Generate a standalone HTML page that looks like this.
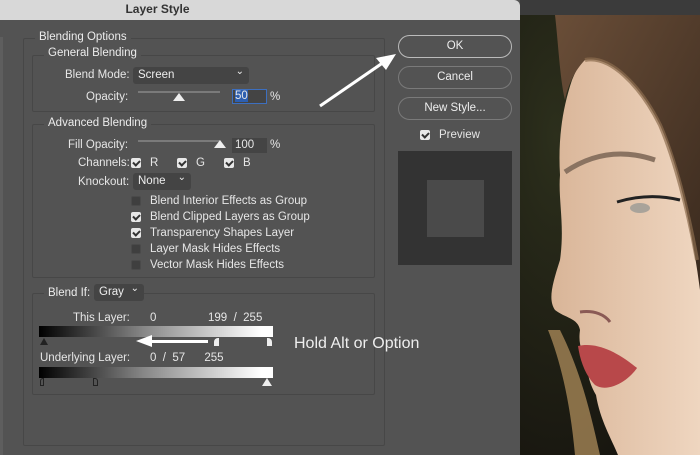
<!DOCTYPE html>
<html><head><meta charset="utf-8"><style>
*{margin:0;padding:0;box-sizing:border-box}
body{width:700px;height:455px;overflow:hidden;background:#535353;font-family:"Liberation Sans",Arial,sans-serif;font-size:11.5px;color:#e6e6e6;position:relative}
.a{position:absolute;white-space:nowrap}
.box{position:absolute;border:1px solid #474747;border-radius:2px}
.lg{position:absolute;background:#535353;padding:0 4px;font-size:11.5px;color:#ececec}
.dd{position:absolute;background:#444;border-radius:3px;height:17px;padding:2px 5px;color:#eee}
.dd:after{content:"⌄";position:absolute;right:5px;top:-1px;font-size:10px}
.cb{position:absolute;width:10px;height:10px;border-radius:2px;background:#3f3f3f;border:1px solid #4a4a4a}
.cb.on{background:#e8e8e8;border:none}
.cb.on:after{content:"";position:absolute;left:3px;top:1px;width:3px;height:5px;border:solid #333;border-width:0 2px 2px 0;transform:rotate(45deg)}
.btn{position:absolute;left:398px;width:114px;height:23px;border:1px solid #7a7a7a;border-radius:12px;text-align:center;line-height:21px;color:#eee;font-size:11.5px}
.fld{position:absolute;background:#444;height:15px;padding:1px 3px}
</style></head><body>
<svg class="a" style="left:520px;top:0" width="180" height="455" viewBox="520 0 180 455">
<defs><radialGradient id="bg" cx="0.2" cy="0.3" r="0.8"><stop offset="0" stop-color="#2c2f1c"/><stop offset="1" stop-color="#17150f"/></radialGradient>
<linearGradient id="sk" x1="0" y1="0" x2="1" y2="0"><stop offset="0" stop-color="#d9b598"/><stop offset="1" stop-color="#efd6c0"/></linearGradient>
<linearGradient id="hr" x1="0" y1="0" x2="1" y2="1"><stop offset="0" stop-color="#6a4e38"/><stop offset="1" stop-color="#3a2a1e"/></linearGradient></defs>
<rect x="520" y="0" width="180" height="455" fill="url(#bg)"/>
<rect x="520" y="0" width="180" height="15" fill="#3b3b3b"/>
<path d="M572 80 C562 110 558 140 560 175 C558 200 565 225 560 260 C552 285 548 300 555 310 C565 318 578 318 580 330 C578 345 582 352 588 360 C586 372 590 385 596 395 C600 420 612 440 618 455 L700 455 L700 15 L600 15 Z" fill="url(#sk)"/>
<path d="M555 15 L700 15 L700 290 C692 230 680 170 660 125 C640 85 610 55 585 60 C575 70 568 85 565 100 C560 80 558 40 555 15Z" fill="url(#hr)"/>
<path d="M585 60 C610 55 640 85 660 125 C675 160 688 210 697 260" stroke="#8c6c4e" stroke-width="4" fill="none" opacity="0.7"/>
<path d="M565 172 C590 155 620 148 655 160" stroke="#8a7361" stroke-width="5" fill="none"/>
<path d="M617 202 C640 195 660 195 680 200" stroke="#222" stroke-width="3" fill="none"/>
<ellipse cx="640" cy="208" rx="10" ry="5" fill="#a9a39a"/>
<path d="M578 346 C595 342 615 350 637 368 C625 385 605 392 595 385 C585 375 580 360 578 346Z" fill="#b8484a"/>
<path d="M580 312 C595 310 605 315 610 322" stroke="#8a5a55" stroke-width="3" fill="none"/>
<path d="M548 330 C560 360 570 400 575 455 L600 455 C590 410 580 370 560 330Z" fill="#9c7f52" opacity="0.85"/>
</svg>
<div class="a" style="left:0;top:0;width:520px;height:455px;background:#535353;border-radius:0 0 8px 0"></div>
<div class="a" style="left:0;top:0;width:520px;height:20px;background:#d8d8d8;border-radius:0 6px 0 0;text-align:center;line-height:19px;color:#333;font-weight:bold;font-size:12px;padding-right:205px">Layer Style</div>
<div class="a" style="left:0;top:37px;width:3px;height:418px;background:#5e5e5e"></div>
<div class="box" style="left:23px;top:38px;width:362px;height:408px"></div>
<div class="lg" style="left:35px;top:31px">Blending Options</div>
<div class="box" style="left:32px;top:55px;width:343px;height:57px"></div>
<div class="lg" style="left:44px;top:47px">General Blending</div>
<div class="a" style="left:65px;top:69px">Blend Mode:</div>
<div class="dd" style="left:133px;top:67px;width:116px">Screen</div>
<div class="a" style="left:86px;top:91px">Opacity:</div>
<div class="a" style="left:138px;top:91px;width:82px;height:2px;background:#7a7a7a"></div>
<div class="a" style="left:173px;top:93px;width:0;height:0;border-left:6px solid transparent;border-right:6px solid transparent;border-bottom:8px solid #eee"></div>
<div class="fld" style="left:232px;top:89px;width:35px;border:1px solid #3d6fbf;padding:0 2px"><span style="background:#2d5fb0">50</span></div>
<div class="a" style="left:270px;top:91px">%</div>
<div class="box" style="left:32px;top:124px;width:343px;height:154px"></div>
<div class="lg" style="left:44px;top:117px">Advanced Blending</div>
<div class="a" style="left:68px;top:139px">Fill Opacity:</div>
<div class="a" style="left:138px;top:140px;width:82px;height:2px;background:#7a7a7a"></div>
<div class="a" style="left:214px;top:140px;width:0;height:0;border-left:6px solid transparent;border-right:6px solid transparent;border-bottom:8px solid #eee"></div>
<div class="fld" style="left:232px;top:138px;width:35px">100</div>
<div class="a" style="left:270px;top:139px">%</div>
<div class="a" style="left:78px;top:157px">Channels:</div>
<div class="cb on" style="left:131px;top:158px"></div><div class="a" style="left:150px;top:157px">R</div>
<div class="cb on" style="left:177px;top:158px"></div><div class="a" style="left:196px;top:157px">G</div>
<div class="cb on" style="left:224px;top:158px"></div><div class="a" style="left:243px;top:157px">B</div>
<div class="a" style="left:78px;top:176px">Knockout:</div>
<div class="dd" style="left:133px;top:173px;width:58px">None</div>
<div class="cb" style="left:131px;top:196px"></div><div class="a" style="left:150px;top:195px">Blend Interior Effects as Group</div>
<div class="cb on" style="left:131px;top:212px"></div><div class="a" style="left:150px;top:211px">Blend Clipped Layers as Group</div>
<div class="cb on" style="left:131px;top:228px"></div><div class="a" style="left:150px;top:227px">Transparency Shapes Layer</div>
<div class="cb" style="left:131px;top:244px"></div><div class="a" style="left:150px;top:243px">Layer Mask Hides Effects</div>
<div class="cb" style="left:131px;top:260px"></div><div class="a" style="left:150px;top:259px">Vector Mask Hides Effects</div>
<div class="box" style="left:32px;top:293px;width:343px;height:102px"></div>
<div class="lg" style="left:44px;top:287px">Blend If:</div>
<div class="dd" style="left:94px;top:284px;width:50px">Gray</div>
<div class="a" style="left:73px;top:312px">This Layer:</div>
<div class="a" style="left:150px;top:312px">0</div>
<div class="a" style="left:208px;top:312px">199 &nbsp;/ &nbsp;255</div>
<div class="a" style="left:39px;top:326px;width:234px;height:11px;background:linear-gradient(90deg,#000,#888 45%,#fff 95%)"></div>
<div class="a" style="left:39px;top:367px;width:234px;height:11px;background:linear-gradient(90deg,#000,#888 45%,#fff 95%)"></div>
<div class="a" style="left:40px;top:338px;width:0;height:0;border-left:4px solid transparent;border-right:4px solid transparent;border-bottom:7px solid #222"></div>
<div class="a" style="left:214px;top:338px;width:5px;height:8px;background:#eee;border-radius:4px 0 0 0"></div>
<div class="a" style="left:267px;top:338px;width:5px;height:8px;background:#eee;border-radius:0 4px 0 0"></div>
<div class="a" style="left:150px;top:340px;width:58px;height:3px;background:#fff"></div>
<div class="a" style="left:136px;top:335px;width:0;height:0;border-top:6px solid transparent;border-bottom:6px solid transparent;border-right:16px solid #fff"></div>
<div class="a" style="left:294px;top:335px;font-size:16px;color:#eee">Hold Alt or Option</div>
<div class="a" style="left:40px;top:352px">Underlying Layer:</div>
<div class="a" style="left:150px;top:352px">0 &nbsp;/ &nbsp;57 &nbsp; &nbsp; &nbsp;255</div>
<div class="a" style="left:40px;top:378px;width:4px;height:8px;border:1px solid #222;border-radius:3px 0 0 0"></div>
<div class="a" style="left:93px;top:378px;width:5px;height:8px;border:1px solid #222;border-radius:0 3px 0 0"></div>
<div class="a" style="left:262px;top:378px;width:0;height:0;border-left:5px solid transparent;border-right:5px solid transparent;border-bottom:8px solid #eee"></div>
<svg class="a" style="left:310px;top:50px" width="90" height="62"><line x1="10" y1="56" x2="74" y2="12" stroke="#fff" stroke-width="3"/><polygon points="86,4 66,8 76,20" fill="#fff"/></svg>
<div class="btn" style="top:35px;border-color:#bbb">OK</div>
<div class="btn" style="top:66px">Cancel</div>
<div class="btn" style="top:97px">New Style...</div>
<div class="cb on" style="left:420px;top:130px"></div>
<div class="a" style="left:439px;top:129px">Preview</div>
<div class="a" style="left:398px;top:151px;width:114px;height:114px;background:#333"></div>
<div class="a" style="left:427px;top:180px;width:57px;height:57px;background:#4a4a4a"></div>
</body></html>
